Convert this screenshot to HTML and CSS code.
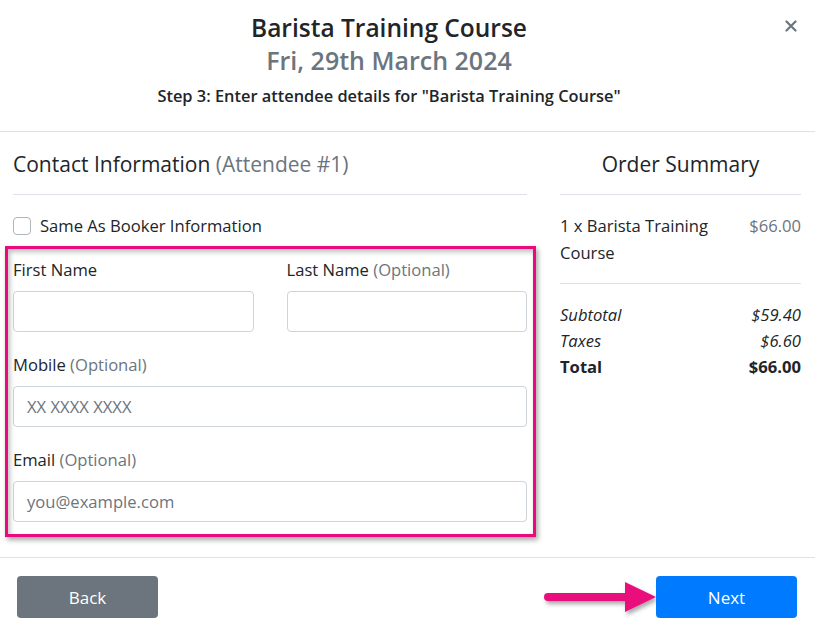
FILE: index.html
```html
<!DOCTYPE html>
<html>
<head>
<meta charset="utf-8">
<link rel="stylesheet" href="styles.css">
</head>
<body>
<div class="modal">
  <header class="modal-header">
    <div class="head-text">
      <h1 class="title">Barista Training Course</h1>
      <div class="date">Fri, 29th March 2024</div>
      <div class="step">Step 3: Enter attendee details for "Barista Training Course"</div>
    </div>
    <button class="close" aria-label="Close">
      <svg width="12" height="12" viewBox="0 0 12 12"><path d="M1.5 1.5 L10.5 10.5 M10.5 1.5 L1.5 10.5" stroke="#6c757d" stroke-width="2.2" stroke-linecap="round"/></svg>
    </button>
  </header>
  <main class="modal-body">
    <section class="contact">
      <h2 class="section-title">Contact Information <span class="muted">(Attendee #1)</span></h2>
      <hr class="rule">
      <label class="check-row"><span class="checkbox"></span>Same As Booker Information</label>
      <div class="form-area">
        <div class="row-2">
          <div class="field">
            <label class="lbl">First Name</label>
            <div class="input"></div>
          </div>
          <div class="field">
            <label class="lbl">Last Name <span class="muted">(Optional)</span></label>
            <div class="input"></div>
          </div>
        </div>
        <div class="field">
          <label class="lbl">Mobile <span class="muted">(Optional)</span></label>
          <div class="input"><span class="ph">XX XXXX XXXX</span></div>
        </div>
        <div class="field">
          <label class="lbl">Email <span class="muted">(Optional)</span></label>
          <div class="input"><span class="ph">you@example.com</span></div>
        </div>
        <div class="highlight"></div>
      </div>
    </section>
    <aside class="summary">
      <h2 class="summary-title">Order Summary</h2>
      <hr class="rule">
      <div class="item">
        <span class="item-name">1 x Barista Training Course</span>
        <span class="muted">$66.00</span>
      </div>
      <hr class="rule rule-2">
      <div class="totals">
        <div class="trow it"><span>Subtotal</span><span>$59.40</span></div>
        <div class="trow it"><span>Taxes</span><span>$6.60</span></div>
        <div class="trow bold"><span>Total</span><span>$66.00</span></div>
      </div>
    </aside>
  </main>
  <footer class="modal-footer">
    <button class="btn btn-back">Back</button>
    <div class="next-wrap">
      <svg class="arrow" width="120" height="40" viewBox="0 0 120 40">
        <defs>
          <filter id="sh" x="-10%" y="-30%" width="130%" height="160%">
            <feDropShadow dx="2" dy="3" stdDeviation="2" flood-color="#000" flood-opacity="0.35"/>
          </filter>
        </defs>
        <g filter="url(#sh)">
          <line x1="7" y1="19" x2="90" y2="19" stroke="#ea0a7b" stroke-width="8" stroke-linecap="round"/>
          <polygon points="84,4 115,19 84,34" fill="#ea0a7b"/>
        </g>
      </svg>
      <button class="btn btn-next">Next</button>
    </div>
  </footer>
</div>
</body>
</html>
```

FILE: styles.css
```css
* { box-sizing: border-box; }
html, body { margin: 0; padding: 0; background: #fff; }
body {
  font-family: "Open Sans", "Noto Sans", sans-serif;
  color: #212529;
  font-size: 16.6px;
}
.modal { width: 815px; height: 632px; display: flex; flex-direction: column; }

.modal-header {
  display: flex;
  align-items: flex-start;
  padding: 12px 0 23px;
  border-bottom: 1px solid #dee2e6;
}
.head-text { flex: 1; text-align: center; }
.title {
  margin: 0;
  font-size: 24.5px;
  line-height: 32px;
  font-weight: 600;
  color: #212529;
}
.date {
  font-size: 25px;
  line-height: 32px;
  font-weight: 600;
  color: #6c757d;
}
.step {
  margin-top: 8px;
  font-size: 16.4px;
  line-height: 24px;
  font-weight: 600;
}
.close {
  flex: none;
  border: 0;
  background: none;
  padding: 0;
  margin: 8px 18px 0 7px;
  width: 12px;
  height: 12px;
  display: flex;
}

.modal-body {
  display: grid;
  grid-template-columns: 514px 241px;
  column-gap: 33px;
  padding: 17px 0 0 13px;
  height: 425px;
}
.muted { color: #6c757d; }
.section-title {
  margin: 0;
  font-size: 21px;
  line-height: 30px;
  font-weight: 500;
}
.rule {
  margin: 15px 0 0;
  border: 0;
  border-top: 1px solid #dee2e6;
}
.check-row {
  display: flex;
  align-items: center;
  gap: 9px;
  margin-top: 19px;
  line-height: 24px;
}
.checkbox {
  width: 18px;
  height: 18px;
  border: 1px solid #adb5bd;
  border-radius: 4px;
  background: #fff;
}
.form-area {
  position: relative;
  margin-top: 20px;
  display: flex;
  flex-direction: column;
  gap: 21px;
}
.row-2 {
  display: grid;
  grid-template-columns: 1fr 1fr;
  column-gap: 33px;
}
.field { display: flex; flex-direction: column; gap: 9px; }
.lbl { line-height: 24px; }
.input {
  height: 41px;
  border: 1px solid #ced4da;
  border-radius: 4px;
  padding: 0 13px;
  display: flex;
  align-items: center;
  background: #fff;
}
.ph { color: #6c757d; }
.highlight {
  position: absolute;
  left: -8px;
  right: -9px;
  top: -12px;
  bottom: -15px;
  border: 3px solid #ea0a7b;
  box-shadow: 2px 3px 5px rgba(0,0,0,0.35), inset 2px 3px 5px rgba(0,0,0,0.25);
  pointer-events: none;
}

.summary { display: flex; flex-direction: column; }
.summary-title {
  margin: 0;
  text-align: center;
  font-size: 21px;
  line-height: 30px;
  font-weight: 500;
}
.item {
  display: flex;
  justify-content: space-between;
  margin-top: 17px;
  line-height: 27px;
}
.item-name { width: 150px; }
.rule-2 { margin-top: 17px; }
.totals { margin-top: 18px; }
.trow {
  display: flex;
  justify-content: space-between;
  line-height: 26px;
}
.it { font-style: italic; }
.bold { font-weight: 700; }

.modal-footer {
  border-top: 1px solid #dee2e6;
  display: flex;
  justify-content: space-between;
  align-items: flex-start;
  padding: 18px 18px 0 17px;
  flex: 1;
}
.next-wrap { display: flex; align-items: center; }
.arrow { margin-right: -5px; margin-top: 2px; }
.btn {
  width: 141px;
  height: 42px;
  border: 0;
  border-radius: 4px;
  color: #fff;
  font-family: "Open Sans", sans-serif;
  font-size: 17px;
}
.btn-back { background: #6c757d; }
.btn-next { background: #007bff; }
```
